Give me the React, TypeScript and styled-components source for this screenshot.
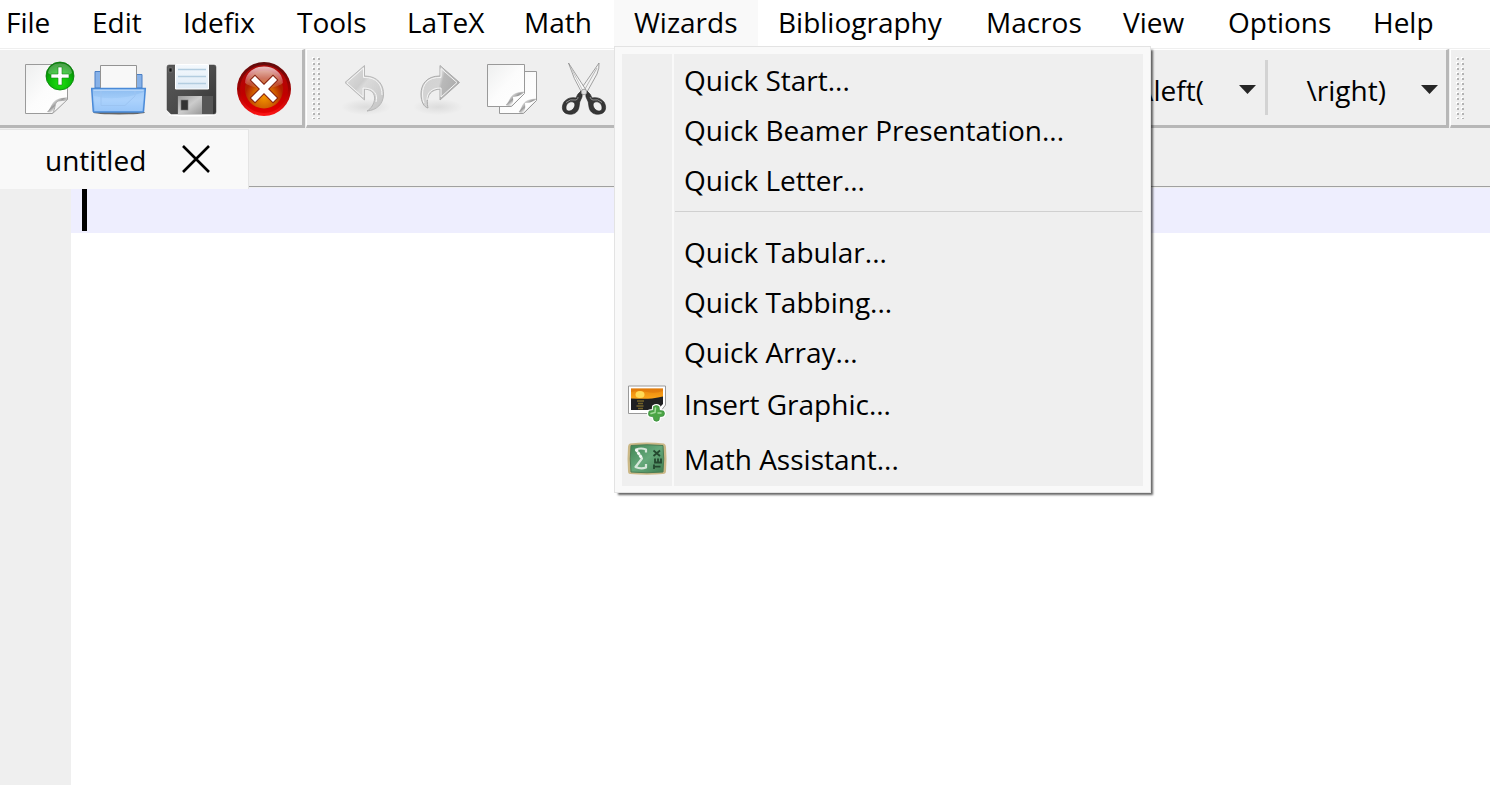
import React from 'react';
import styled, { createGlobalStyle } from 'styled-components';

const GlobalStyle = createGlobalStyle`
  * { box-sizing: border-box; }
  html, body, #root { height: 100%; }
  body {
    margin: 0;
    background: #fff;
    color: #000;
    overflow: hidden;
    font: 28px/40px "Open Sans", "Noto Sans", sans-serif;
  }
  button, select, textarea {
    margin: 0;
    padding: 0;
    border: 0;
    background: none;
    color: inherit;
    font: inherit;
    outline: none;
  }
`;

const Window = styled.div`
  display: flex;
  flex-direction: column;
  min-height: 100%;
`;

const MenuBar = styled.nav`
  display: flex;
  height: 48px;
  background: #fff;
`;

const MenuSlot = styled.div<{ $width: number }>`
  position: relative;
  flex: 0 0 ${p => p.$width}px;
`;

const MenuTitle = styled.button<{ $open?: boolean; $first?: boolean }>`
  width: 100%;
  height: 46px;
  padding-bottom: 2px;
  padding-left: ${p => (p.$first ? 6 : 20)}px;
  text-align: left;
  white-space: nowrap;
  background: ${p => (p.$open ? '#f9f9f9' : 'transparent')};
`;

const Popup = styled.div`
  position: absolute;
  z-index: 5;
  top: 46px;
  left: 0;
  width: 537px;
  padding: 7px 7px 6px;
  border: 1px solid #e3e3e3;
  background: #f9f9f9;
  box-shadow: 3px 3px 2px -1px rgba(0, 0, 0, 0.6);
`;

const PopupBody = styled.div`
  background: linear-gradient(#f9f9f9, #f9f9f9) 50px 0 / 2px 100% no-repeat #efefef;
`;

const PopupItem = styled.button<{ $tall?: boolean }>`
  display: grid;
  grid-template-columns: 62px 1fr;
  align-items: center;
  width: 100%;
  height: ${p => (p.$tall ? 55 : 50)}px;
  padding-top: ${p => (p.$tall ? 0 : 2)}px;
  text-align: left;
  white-space: nowrap;
`;

const PopupIcon = styled.svg`
  display: block;
  margin-left: 5px;
`;

const PopupRule = styled.hr`
  height: 1px;
  margin: 7px 1px 14px 53px;
  border: 0;
  background: #d0d0d0;
`;

const ToolBar = styled.div`
  display: flex;
  gap: 1px;
  height: 80px;
  border-top: 1px solid #efefef;
  background: #efefef;
`;

const ToolGroup = styled.div<{ $grow?: boolean; $width?: number; $start?: boolean; $end?: boolean }>`
  display: flex;
  align-items: center;
  flex: ${p => (p.$grow ? '1 1 0' : `0 0 ${p.$width}px`)};
  min-width: 0;
  height: 79px;
  border: solid;
  border-width: 1px ${p => (p.$end ? 0 : 3)}px 3px ${p => (p.$start ? 0 : 1)}px;
  border-color: #fff #b7b7b7 #b7b7b7 #fff;
  padding-left: ${p => (p.$start ? 11 : 5)}px;
`;

const HandleDots = styled.svg`
  flex: 0 0 8px;
  height: 62px;
  margin-right: 11px;
`;

const ToolButton = styled.button`
  display: grid;
  place-items: center;
  flex: 0 0 72px;
  height: 64px;
  padding-top: 3px;
`;

const Combo = styled.label`
  position: relative;
  display: flex;
  align-items: center;
  flex: 0 0 178px;
  height: 56px;
  padding-top: 4px;
`;

const ComboGroup = styled.div`
  display: flex;
  align-items: center;
  margin-left: auto;
`;

const ComboSelect = styled.select`
  appearance: none;
  width: 118px;
  height: 40px;
  text-align-last: right;
`;

const ComboArrow = styled.svg`
  margin-left: auto;
  margin-right: 8px;
  pointer-events: none;
`;

const ComboRule = styled.div`
  width: 3px;
  height: 55px;
  margin-left: 1px;
  background: #d3d3d3;
`;

const TabBar = styled.div`
  display: flex;
  height: 59px;
  padding-top: 1px;
  background: linear-gradient(#a0a0a0, #a0a0a0) 0 58px / 100% 1px no-repeat #efefef;
`;

const Tab = styled.div`
  display: flex;
  align-items: center;
  flex: 0 0 249px;
  height: 60px;
  padding-left: 45px;
  border-top: 1px solid #e4e4e4;
  border-right: 1px solid #e4e4e4;
  background: #f9f9f9;
  z-index: 1;
`;

const TabClose = styled.button`
  display: flex;
  margin-left: auto;
  margin-right: 37px;
  padding-bottom: 1px;
`;

const EditorArea = styled.main`
  display: flex;
  flex: 1;
  border-top: 1px solid #efefef;
`;

const Gutter = styled.div`
  flex: 0 0 71px;
  background: #efefef;
`;

const Page = styled.div`
  position: relative;
  display: flex;
  flex: 1;
`;

const Source = styled.textarea`
  flex: 1;
  padding: 2px 11px;
  resize: none;
  caret-color: transparent;
  background: linear-gradient(#eeeefe, #eeeefe) 0 0 / 100% 45px no-repeat #fff;
`;

const Caret = styled.span`
  position: absolute;
  top: 1px;
  left: 11px;
  width: 5px;
  height: 42px;
  background: #000;
`;

const HiddenDefs = styled.svg`
  position: absolute;
  width: 0;
  height: 0;
`;

const Icon = ({ children }: { children: React.ReactNode }) => (
  <svg width="56" height="56" viewBox="0 0 56 56" aria-hidden="true">{children}</svg>
);

const Defs = () => (
  <HiddenDefs aria-hidden="true">
    <defs>
      <linearGradient id="paper" x1="0" y1="0" x2="1" y2="1">
        <stop offset="0" stopColor="#eeefef" /><stop offset=".5" stopColor="#fcfcfc" /><stop offset="1" stopColor="#fff" />
      </linearGradient>
      <linearGradient id="fold" x1="0" y1="0" x2="1" y2="1">
        <stop offset="0" stopColor="#fff" stopOpacity="0" /><stop offset=".45" stopColor="#999" /><stop offset=".6" stopColor="#f6f6f6" /><stop offset="1" stopColor="#ddd" />
      </linearGradient>
      <radialGradient id="green" cx=".5" cy=".75" r=".7">
        <stop offset="0" stopColor="#1fe010" /><stop offset=".6" stopColor="#09b407" /><stop offset="1" stopColor="#067706" />
      </radialGradient>
      <linearGradient id="blue" x1="0" y1="0" x2="0" y2="1">
        <stop offset="0" stopColor="#8dbcf0" /><stop offset=".5" stopColor="#a5cefa" /><stop offset="1" stopColor="#83b8f4" />
      </linearGradient>
      <linearGradient id="dark" x1="0" y1="0" x2="1" y2="1">
        <stop offset="0" stopColor="#5a5a5a" /><stop offset=".5" stopColor="#4b4b4b" /><stop offset="1" stopColor="#333" />
      </linearGradient>
      <linearGradient id="label" x1="0" y1="0" x2="0" y2="1">
        <stop offset="0" stopColor="#f4f9fd" /><stop offset="1" stopColor="#dfebf6" />
      </linearGradient>
      <linearGradient id="steel" x1="0" y1="0" x2="1" y2="1">
        <stop offset="0" stopColor="#9a9a9a" /><stop offset=".5" stopColor="#ccc" /><stop offset="1" stopColor="#999" />
      </linearGradient>
      <linearGradient id="red" x1="0" y1="0" x2="0" y2="1">
        <stop offset="0" stopColor="#5e0c0c" /><stop offset=".5" stopColor="#a00000" /><stop offset="1" stopColor="#ff1414" />
      </linearGradient>
      <linearGradient id="redInner" x1="0" y1="0" x2="0" y2="1">
        <stop offset="0" stopColor="#a80808" /><stop offset=".6" stopColor="#c00000" /><stop offset="1" stopColor="#e60000" />
      </linearGradient>
      <radialGradient id="amber" cx=".5" cy=".7" r=".5">
        <stop offset="0" stopColor="#f39400" /><stop offset=".6" stopColor="#d06000" /><stop offset="1" stopColor="#b02000" />
      </radialGradient>
      <linearGradient id="gloss" x1="0" y1="0" x2="0" y2="1">
        <stop offset="0" stopColor="#fff" stopOpacity=".75" /><stop offset="1" stopColor="#fff" stopOpacity=".08" />
      </linearGradient>
      <linearGradient id="arrow" x1="0" y1="0" x2="1" y2="1">
        <stop offset="0" stopColor="#e2e2e2" /><stop offset=".4" stopColor="#cdcdcd" /><stop offset=".46" stopColor="#dadada" /><stop offset="1" stopColor="#c4c4c4" />
      </linearGradient>
      <linearGradient id="arrowR" x1="0" y1="0" x2="1" y2=".3">
        <stop offset="0" stopColor="#d2d2d2" /><stop offset=".55" stopColor="#d4d4d4" /><stop offset=".62" stopColor="#b9b9b9" /><stop offset="1" stopColor="#adadad" />
      </linearGradient>
      <radialGradient id="shade"><stop offset="0" stopColor="#dcdcdc" /><stop offset="1" stopColor="#efefef" /></radialGradient>
      <linearGradient id="sunset" x1="0" y1="0" x2="0" y2="1">
        <stop offset="0" stopColor="#e8850c" /><stop offset="1" stopColor="#ffab1c" />
      </linearGradient>
      <linearGradient id="board" x1="0" y1="0" x2="1" y2="1">
        <stop offset="0" stopColor="#3f8553" /><stop offset=".5" stopColor="#66a97b" /><stop offset="1" stopColor="#3f7d50" />
      </linearGradient>
    </defs>
  </HiddenDefs>
);

const NewIcon = () => (
  <Icon>
    <path d="M6.5 3.500H48.5V38.5L33.5 52.5H6.5Z" fill="url(#paper)" stroke="#9a9a9a" />
    <path d="M28 51C34 46 31 37 48 36.5V39L34 52Z" fill="url(#fold)" />
    <path d="M33.5 52.5C37 47 35 42 39 40C42 39.500 45 39.500 48.500 38.500Z" fill="#f3f3f3" stroke="#aaa" />
    <circle cx="41" cy="15" r="14" fill="url(#green)" stroke="#08800a" strokeWidth=".8" />
    <path d="M29 12C30 -1 52 -1 53 12C47 17 35 17 29 12Z" fill="#fff" opacity=".28" />
    <path d="M39 6h4v7h7v4h-7v7h-4v-7h-7v-4h7Z" fill="#fff" stroke="#18851a" strokeWidth=".6" />
  </Icon>
);

const OpenIcon = () => (
  <Icon>
    <path d="M4 27V10.500H16V27ZM38 27V13.500H51V27Z" fill="#86b1e8" stroke="#4a7fc5" />
    <path d="M9.500 28V4.500H45.500V28Z" fill="#f8f8f8" stroke="#939393" />
    <ellipse cx="28" cy="51.500" rx="26" ry="2" fill="#666" />
    <path d="M.7 27.500H54.300L52.500 50.500Q52 51 51 51H3.500Q2.500 51 2.300 50.500Z" fill="url(#blue)" stroke="#4a8ad8" strokeWidth="1.500" />
    <path d="M2.500 29.200H52.500" stroke="#c3defc" />
    <path d="M3 35Q26 41 53 31L51 50H4Z" fill="#b4d7ff" opacity=".45" />
    <path d="M10 30V44.500H34L44 35V30" fill="none" stroke="#9cc4f2" />
  </Icon>
);

const SaveIcon = () => (
  <Icon>
    <ellipse cx="29" cy="54" rx="24" ry="1.500" fill="#fff" />
    <path d="M6 4H51Q53 4 53 6V51Q53 53 51 53H8L4 49V6Q4 4 6 4Z" fill="url(#dark)" stroke="#444" strokeWidth=".5" />
    <path d="M12.500 3.500H45.500V28H12.500Z" fill="url(#label)" stroke="#fff" />
    <path d="M15 8.500H43M15 15.500H43M15 22.500H43" stroke="#b3cde0" strokeWidth="1.500" />
    <rect x="6" y="7" width="3" height="4" fill="#161616" stroke="#888" strokeWidth=".5" />
    <rect x="14" y="35" width="36" height="18" fill="#565656" />
    <path d="M15 35H39V53H15Z" fill="url(#steel)" />
    <rect x="18" y="39" width="7" height="10" fill="#333" stroke="#777" strokeWidth=".6" />
  </Icon>
);

const StopIcon = () => (
  <Icon>
    <circle cx="29" cy="28" r="27" fill="url(#red)" />
    <circle cx="29" cy="28" r="24" fill="url(#redInner)" />
    <circle cx="29" cy="28.500" r="19" fill="url(#amber)" />
    <path d="M10 22C11 0 47 0 48 22C39 29 19 29 10 22Z" fill="url(#gloss)" />
    <path d="M20 15L29 24L38 15L42 19L33 28L42 37L38 41L29 32L20 41L16 37L25 28L16 19Z" fill="#fff" stroke="#821" strokeWidth="2" paintOrder="stroke" />
  </Icon>
);

const UndoIcon = () => (
  <Icon>
    <ellipse cx="27" cy="46" rx="25" ry="8" fill="url(#shade)" />
    <path d="M6 21.500L25.500 4.500V15C39 15 45 24 44.500 34C44 43 38 49 28 50C36 46 41 29 25.500 28V39Z" fill="url(#arrow)" stroke="#b7b7b7" />
    <path d="M8 21.500L24.500 7V16.500C38 16 43 24 43 34M8 22L24 36V27C36 27 39 34 37 41" fill="none" stroke="#f5f5f5" />
  </Icon>
);

const RedoIcon = () => (
  <Icon>
    <ellipse cx="27" cy="46" rx="25" ry="8" fill="url(#shade)" />
    <path d="M48.500 21.500L29 4.500V15C15 15 10 24 10 33C10 41 13 46 17 47C15 38 17 29 29 28V39Z" fill="url(#arrowR)" stroke="#aaa" />
    <path d="M46 21.500L30 7.500V16.500C16 16 11.500 24 11.500 33Q11.500 39 13 42M16 39C16 31 21 27 30 27V36L46 21.500" fill="none" stroke="#f5f5f5" />
  </Icon>
);

const CopyIcon = () => (
  <Icon>
    <path d="M16.500 10.500H53.500V39.500L40.500 52.500H16.500Z" fill="url(#paper)" stroke="#999" />
    <path d="M36 51C41 44 39 39 53 38L40 52Z" fill="url(#fold)" stroke="#aaa" strokeWidth=".4" />
    <path d="M41 51Q43 47 42 42Q47 42 52 39.500Z" fill="#fff" />
    <path d="M4.500 3.500H41.500V32.500L28.500 45.500H4.500Z" fill="url(#paper)" stroke="#999" />
    <path d="M23 44C29 38 26 32 41 31L28 45Z" fill="url(#fold)" stroke="#aaa" strokeWidth=".4" />
    <path d="M29 44Q31 40 30 36Q35 36 40 33Z" fill="#fff" />
  </Icon>
);

const CutIcon = () => (
  <Icon>
    <path d="M44 2Q44.500 7 42 13L32 31L26 28Z" fill="#f2f2f2" stroke="#8a8a8a" strokeWidth=".8" />
    <path d="M42 7L30 28" stroke="#b5b5b5" />
    <path d="M13.500 2L31 29L28 34Q18 17 13.500 2Z" fill="#fafafa" stroke="#8a8a8a" strokeWidth=".8" />
    <path d="M16 7L28 30" stroke="#c2c2c2" />
    <path fillRule="evenodd" fill="#363636" stroke="#222" strokeWidth=".6" d="M26 30Q28 33 27 36Q24 41 24 46C23 52 18 54 13 53C7 52 6 46 9 41C12 37 17 36 21 37Q22 33 26 30ZM18 41C14 40 11 43 11 47C11 50 14 51 17 49C20 47 21 42 18 41Z" />
    <path fillRule="evenodd" fill="#363636" stroke="#222" strokeWidth=".6" d="M32 30Q30 33 31 36Q34 41 34 46C35 52 40 54 45 53C51 52 52 46 49 41C46 37 41 36 37 37Q36 33 32 30ZM40 41C44 40 47 43 47 47C47 50 44 51 41 49C38 47 37 42 40 41Z" />
    <path d="M23 36Q23.500 38 21 39Q15 37.500 11 41.500M35 36Q36 39 38 39Q43 37.500 47 41.500" fill="none" stroke="#8d8d8d" />
    <circle cx="29" cy="31" r="2.800" fill="#dedede" stroke="#888" strokeWidth=".7" />
  </Icon>
);

const GraphicIcon = () => (
  <PopupIcon width="40" height="40" viewBox="0 0 40 40" aria-hidden="true">
    <path d="M1.500 2H38.500V21L32 29.500H1.500Z" fill="#fff" stroke="#999" />
    <rect x="4" y="4.500" width="32" height="12" fill="url(#sunset)" />
    <path d="M4 8Q12 6 20 8T36 7V4.500H4Z" fill="#d9700a" opacity=".5" />
    <ellipse cx="13" cy="10.500" rx="4.500" ry="3.500" fill="#ffd955" />
    <path d="M4 14.500Q18 15 25 14.500L31 13.500L36 12.500V20L30 26H4Z" fill="#202022" />
    <path d="M10 17h7M11 19.500h5M9.500 22h7M11 24.500h5" stroke="#75632a" strokeWidth="1.400" />
    <path d="M26.500 22.500q3-2 5.500 0l.5 4 4 .5q2 2.500 0 5l-4 .8-.5 3.500q-2.500 2-5 0l-.8-3.500-4-.8q-1.500-2.500 0-5l4-.5Z" fill="#fff" stroke="#fff" strokeWidth="3" strokeLinejoin="round" />
    <path d="M26.500 22.500q3-2 5.500 0l.5 4 4 .5q2 2.500 0 5l-4 .8-.5 3.500q-2.500 2-5 0l-.8-3.500-4-.8q-1.500-2.500 0-5l4-.5Z" fill="#4ba545" stroke="#35893a" strokeWidth=".7" />
    <path d="M28.500 24L28 28.500L24 29.500M31 29h3" fill="none" stroke="#a4dc9c" strokeWidth="1.500" strokeLinecap="round" />
  </PopupIcon>
);

const MathIcon = () => (
  <PopupIcon width="40" height="36" viewBox="0 0 40 36" aria-hidden="true">
    <path d="M3 2.500Q20 .5 37 2.500Q39 3.500 39 6Q40 18 39 30Q39 33 36 33Q20 34.500 3 33Q1 33 1 30Q0 18 1 6Q1 3 3 2.500Z" fill="#cbb887" />
    <path d="M4 4.500Q20 3 36 4.500Q37.500 18 36 31Q20 32.500 4 31Q2.500 18 4 4.500Z" fill="url(#board)" stroke="#4b7d55" />
    <path d="M19 11.500V8.500Q14 6.500 9 8.500L15 17.500L8.500 26Q14 28.500 19 26.500V23" fill="none" stroke="#d5e6d9" strokeWidth="2.200" strokeLinejoin="round" />
    <path d="M9 8.500L15 17.500" fill="none" stroke="#f6faf7" strokeWidth="2.800" strokeDasharray="2.500 1" />
    <path d="M27 23.500V28M27 25.700H33.500M28 17.500V21.500H34V17.500M31 17.500V21.500M26.500 9.500L33 15M26.500 15L33 9.500" fill="none" stroke="#24482f" strokeWidth="1.800" />
  </PopupIcon>
);

const Grip = () => (
  <HandleDots width="8" height="62" viewBox="0 0 8 62" aria-hidden="true">
    {Array.from({ length: 13 }, (_, row) =>
      [0, 5].map(x => (
        <g key={`${row}-${x}`}>
          <rect x={x} y={row * 5} width="2" height="2" fill="#fff" />
          <rect x={x + 1} y={row * 5 + 1} width="2" height="2" fill="#b4b4b4" />
        </g>
      )),
    )}
  </HandleDots>
);

const menus: { title: string; width: number }[] = [
  { title: 'File', width: 72 },
  { title: 'Edit', width: 91 },
  { title: 'Idefix', width: 114 },
  { title: 'Tools', width: 110 },
  { title: 'LaTeX', width: 117 },
  { title: 'Math', width: 110 },
  { title: 'Wizards', width: 144 },
  { title: 'Bibliography', width: 208 },
  { title: 'Macros', width: 137 },
  { title: 'View', width: 105 },
  { title: 'Options', width: 145 },
  { title: 'Help', width: 102 },
];

const WizardMenu = () => (
  <Popup role="menu" aria-label="Wizards">
    <PopupBody>
      {['Quick Start...', 'Quick Beamer Presentation...', 'Quick Letter...'].map(t => (
        <PopupItem key={t} role="menuitem"><span /><span>{t}</span></PopupItem>
      ))}
      <PopupRule />
      {['Quick Tabular...', 'Quick Tabbing...', 'Quick Array...'].map(t => (
        <PopupItem key={t} role="menuitem"><span /><span>{t}</span></PopupItem>
      ))}
      <PopupItem role="menuitem" $tall><GraphicIcon /><span>Insert Graphic...</span></PopupItem>
      <PopupItem role="menuitem" $tall><MathIcon /><span>Math Assistant...</span></PopupItem>
    </PopupBody>
  </Popup>
);

const Delimiter = ({ label, value }: { label: string; value: string }) => (
  <Combo>
    <ComboSelect aria-label={label} defaultValue={value}>
      <option>{value}</option>
    </ComboSelect>
    <ComboArrow width="17" height="9" viewBox="0 0 17 9" aria-hidden="true">
      <path d="M0 0H17L8.500 9Z" fill="#262626" />
    </ComboArrow>
  </Combo>
);

export default function App() {
  return (
    <Window>
      <GlobalStyle />
      <Defs />
      <MenuBar aria-label="Main menu">
        {menus.map((m, i) => (
          <MenuSlot key={m.title} $width={m.width}>
            <MenuTitle $first={i === 0} $open={m.title === 'Wizards'}>{m.title}</MenuTitle>
            {m.title === 'Wizards' && <WizardMenu />}
          </MenuSlot>
        ))}
      </MenuBar>
      <ToolBar role="toolbar" aria-label="Tools">
        <ToolGroup $width={305} $start>
          <ToolButton aria-label="New"><NewIcon /></ToolButton>
          <ToolButton aria-label="Open"><OpenIcon /></ToolButton>
          <ToolButton aria-label="Save"><SaveIcon /></ToolButton>
          <ToolButton aria-label="Close"><StopIcon /></ToolButton>
        </ToolGroup>
        <ToolGroup $grow>
          <Grip />
          <ToolButton aria-label="Undo"><UndoIcon /></ToolButton>
          <ToolButton aria-label="Redo"><RedoIcon /></ToolButton>
          <ToolButton aria-label="Copy"><CopyIcon /></ToolButton>
          <ToolButton aria-label="Cut"><CutIcon /></ToolButton>
          <ComboGroup>
            <Delimiter label="Left delimiter" value="\left(" />
            <ComboRule />
            <Delimiter label="Right delimiter" value="\right)" />
          </ComboGroup>
        </ToolGroup>
        <ToolGroup $width={40} $end>
          <Grip />
        </ToolGroup>
      </ToolBar>
      <TabBar>
        <Tab>
          <span>untitled</span>
          <TabClose aria-label="Close tab">
            <svg width="30" height="30" viewBox="0 0 30 30" aria-hidden="true">
              <path d="M2 2L28 28M28 2L2 28" stroke="#000" strokeWidth="2.600" />
            </svg>
          </TabClose>
        </Tab>
      </TabBar>
      <EditorArea>
        <Gutter />
        <Page>
          <Source aria-label="Source" spellCheck={false} />
          <Caret />
        </Page>
      </EditorArea>
    </Window>
  );
}
